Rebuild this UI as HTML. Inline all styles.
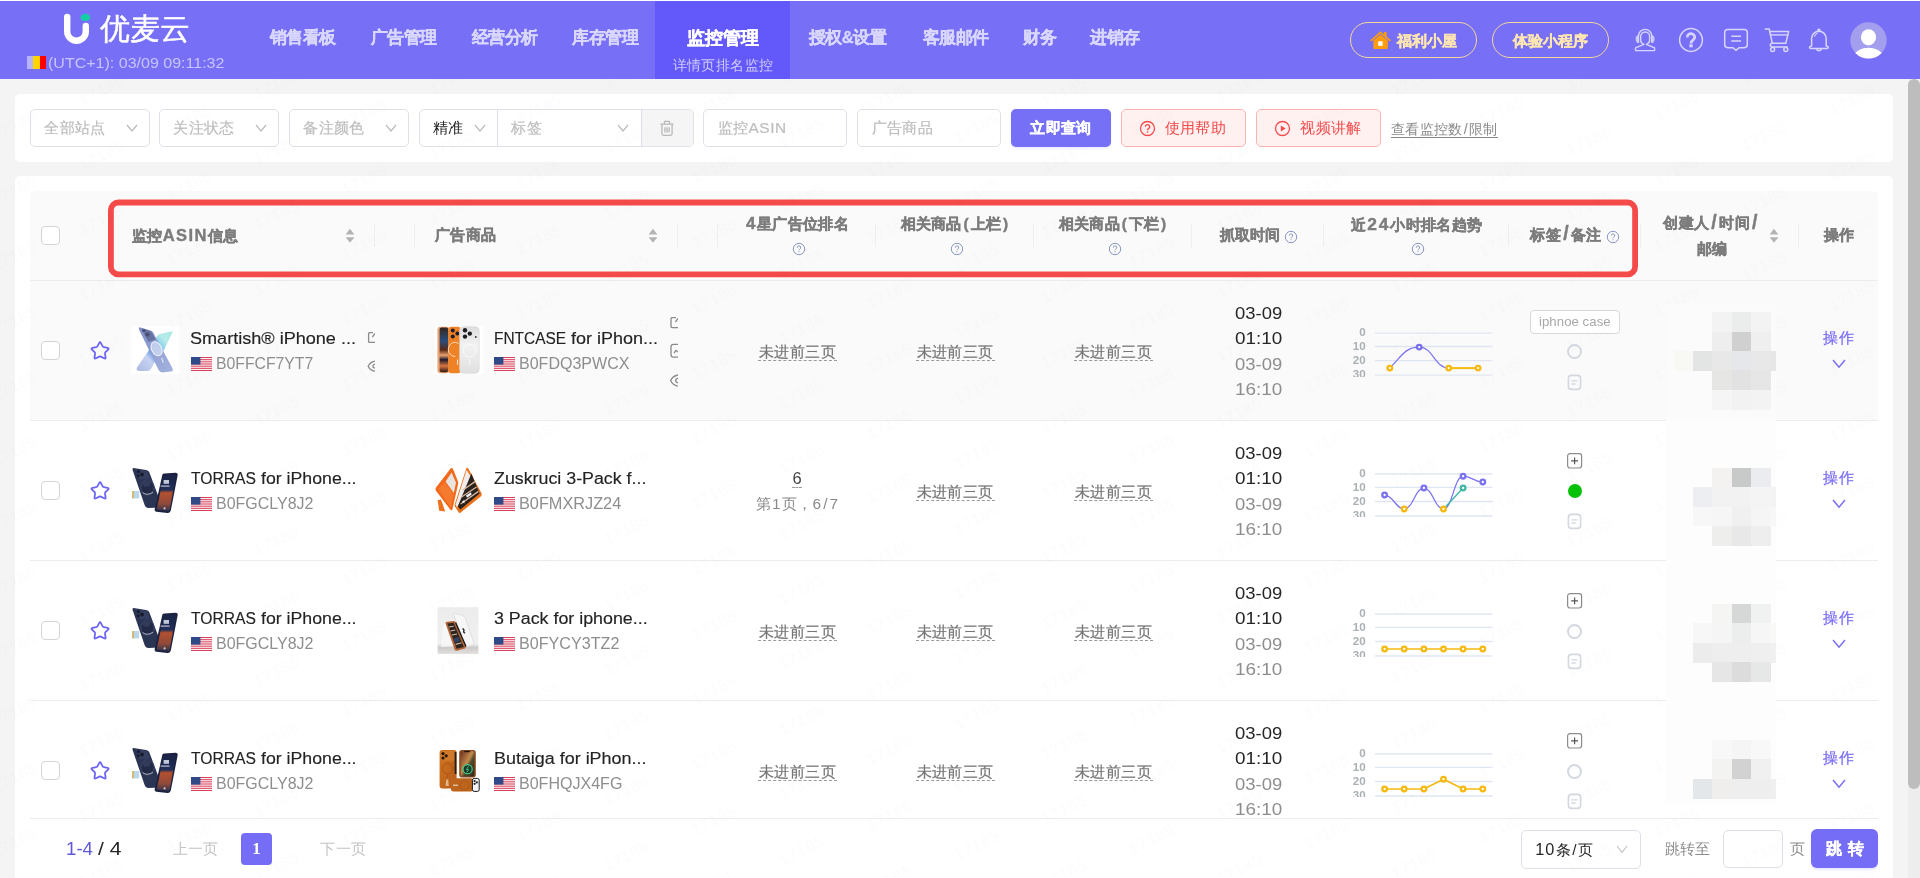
<!DOCTYPE html><html lang="zh"><head><meta charset="utf-8"><title>page</title><style>
*{box-sizing:border-box;margin:0;padding:0}
html,body{width:1920px;height:878px;overflow:hidden;background:#f4f4f4;font-family:"Liberation Sans",sans-serif;}
.a{position:absolute}
.t{position:absolute;white-space:nowrap;line-height:20px;height:20px}
.c{text-align:center}
.hd{left:0;top:1px;width:1920px;height:78px;background:#7770f6}
.nav{color:#d9d7fd;-webkit-text-stroke:0.3px #d9d7fd;font-weight:bold;font-size:16.5px;letter-spacing:-0.5px}
.card{background:#fff;border-radius:5px}
.sel{border:1px solid #e0e0e9;border-radius:5px;background:#fff;height:38px;top:109px}
.ph{color:#bdbdbd;-webkit-text-stroke:0.2px #bdbdbd;font-size:15.4px;letter-spacing:0.4px}
.th{color:#7c7c7c;-webkit-text-stroke:0.4px #7c7c7c;font-weight:bold;font-size:15.4px;letter-spacing:0.3px}
.sep{width:1px;height:24px;top:223px;background:#efefef}
.row{left:30px;width:1848px;height:140px;border-bottom:1px solid #ececec}
.cb{width:18.6px;height:19px;border:1px solid #d4d4d4;border-radius:4px;background:#fff;left:41.2px}
.sl{font-size:19.5px;padding:0 2.2px;line-height:10px;position:relative;top:0.8px}
.ttl{color:#232323;-webkit-text-stroke:0.15px #232323}
.asin{color:#8e8e8e}
.nr{color:#767676;-webkit-text-stroke:0.2px #767676;font-size:15.4px;letter-spacing:0.4px;width:79px;border-bottom:1px dashed #9a9a9a;height:18px;line-height:17px;text-align:center}
.tm{font-size:16.5px;letter-spacing:1px;width:60px;text-align:center}
.op{color:#7b6ef6;-webkit-text-stroke:0.25px #7b6ef6;font-size:15.4px;letter-spacing:0.4px}
</style></head><body><div id="root" style="position:absolute;left:0;top:0;width:1920px;height:878px;will-change:transform"><div class="a" style="left:0;top:0;width:1920px;height:1px;background:#fff"></div><div class="a hd"></div><div class="a" style="left:655px;top:1px;width:135px;height:78px;background:#6359fa"></div><svg class="a" style="left:55px;top:8px" width="40" height="42" viewBox="55 8 40 42"><path d="M67.2 17 V31.5 A9.3 9.3 0 0 0 85.8 31.5 V26" fill="none" stroke="#fff" stroke-width="6.4" stroke-linecap="round"/><ellipse cx="85.4" cy="17.6" rx="4.9" ry="3.5" fill="#13cfa4"/><circle cx="85.6" cy="15.6" r="2.2" fill="#13cfa4"/></svg><div class="t " style="left:99.5px;top:19.00px;color:#fff;-webkit-text-stroke:0.45px #fff;font-size:29.7px;font-weight:500;line-height:40px;height:40px;top:9px">优麦云</div><div class="a" style="left:27px;top:56px;width:6.4px;height:13px;background:#b8b4fb"></div><div class="a" style="left:33.3px;top:56px;width:6.4px;height:13px;background:#ffd400"></div><div class="a" style="left:39.6px;top:56px;width:6.4px;height:13px;background:#ff0000"></div><div class="t " style="left:48.2px;top:52.60px;font-size:14.8px;font-weight:normal;transform:scaleX(1.0822);transform-origin:0 50%;color:#c7c4fb">(UTC+1): 03/09 09:11:32</div><div class="t nav c" style="left:202.5px;top:26.70px;width:200px;">销售看板</div><div class="t nav c" style="left:303.5px;top:26.70px;width:200px;">广告管理</div><div class="t nav c" style="left:404.5px;top:26.70px;width:200px;">经营分析</div><div class="t nav c" style="left:505.0px;top:26.70px;width:200px;">库存管理</div><div class="t nav c" style="left:747.5px;top:26.70px;width:200px;">授权&amp;设置</div><div class="t nav c" style="left:855.5px;top:26.70px;width:200px;">客服邮件</div><div class="t nav c" style="left:939.5px;top:26.70px;width:200px;">财务</div><div class="t nav c" style="left:1015.0px;top:26.70px;width:200px;">进销存</div><div class="t  c" style="left:623.0px;top:28.20px;width:200px;color:#fff;-webkit-text-stroke:0.3px #fff;font-weight:bold;font-size:17.8px">监控管理</div><div class="t  c" style="left:623.0px;top:55.00px;width:200px;color:#cfcbfd;font-size:14.3px;letter-spacing:0.35px">详情页排名监控</div><div class="a" style="left:1350px;top:22px;width:127px;height:36px;border:1px solid #f3d79a;border-radius:18px"></div><div class="a" style="left:1491.5px;top:22px;width:117px;height:36px;border:1px solid #f3d79a;border-radius:18px"></div><svg class="a" style="left:1369px;top:30px" width="24" height="20" viewBox="0 0 24 20"><path d="M1.2 10.2 L11.5 1.2 L15 4.2 V2 H17.6 V6.4 L22 10.2 L20.8 11.4 L11.5 3.6 L2.4 11.4 Z" fill="#ff9c0b"/><path d="M4.4 10.6 L11.5 4.6 L18.8 10.6 V18 Q18.8 19 17.8 19 H5.4 Q4.4 19 4.4 18 Z" fill="#ff9c0b"/><rect x="9.2" y="11.3" width="4.4" height="4.6" fill="#fff"/></svg><div class="t " style="left:1396.8px;top:30.50px;color:#fde6b1;-webkit-text-stroke:0.3px #fde6b1;font-weight:bold;font-size:15.4px">福利小屋</div><div class="t " style="left:1512.8px;top:31.00px;color:#fde6b1;-webkit-text-stroke:0.3px #fde6b1;font-weight:bold;font-size:15.4px">体验小程序</div><svg class="a" style="left:1632px;top:26px" width="26" height="28" viewBox="1632 26 26 28" fill="none" stroke="#d8d5fd" stroke-width="1.4" stroke-linejoin="round"><path d="M1643.9 44.4 C1641.5 43 1640.7 42 1640.7 40.4 V36.4 A4.45 4.45 0 0 1 1649.6 36.4 V40.4 C1649.6 42 1648.8 43 1646.4 44.4 L1654.6 47.9 V50.6 H1635.5 V47.9 Z"/><path d="M1638.5 42.8 V35.9 A6.6 6.6 0 0 1 1651.7 35.9 V42.8"/><path d="M1637.9 35.2 A3 4.2 0 0 0 1637.9 43 Z M1652.3 35.2 A3 4.2 0 0 1 1652.3 43 Z" fill="#d8d5fd" fill-opacity=".75" stroke-width="0.8"/></svg><svg class="a" style="left:1677px;top:26px" width="28" height="28" viewBox="1677 26 28 28" fill="none" stroke="#d8d5fd" stroke-width="1.5"><circle cx="1691" cy="40" r="11.4"/><path d="M1687.3 37.3 A3.7 3.5 0 1 1 1693.2 39.9 Q1691 41.4 1691 43.4" stroke-width="2.7"/><rect x="1689.4" y="44.3" width="3.3" height="3" fill="#d8d5fd" stroke="none"/></svg><svg class="a" style="left:1722px;top:26px" width="28" height="28" viewBox="1722 26 28 28" fill="none" stroke="#d8d5fd" stroke-width="1.5" stroke-linejoin="round"><path d="M1727.8 29.5 H1744.2 Q1747.3 29.5 1747.3 32.6 V44.6 Q1747.3 47.7 1744.2 47.7 H1739 L1736 50.4 L1733 47.7 H1727.8 Q1724.7 47.7 1724.7 44.6 V32.6 Q1724.7 29.5 1727.8 29.5 Z"/><path d="M1731.3 36.3 H1741 M1731.3 41 H1741"/></svg><svg class="a" style="left:1763px;top:26px" width="28" height="28" viewBox="1763 26 28 28" fill="none" stroke="#d8d5fd" stroke-width="1.5" stroke-linejoin="round" stroke-linecap="round"><path d="M1765.3 29 H1769.2 L1772.3 43.2 Q1770 43.6 1770.3 45.3 Q1770.7 47 1772.6 47 H1787.2"/><path d="M1769.8 31.6 H1788.6 L1785.8 43.2 H1772.4"/><path d="M1770.6 34.9 H1787.6" stroke-width="1.7" stroke-opacity=".8"/><circle cx="1772.6" cy="49.4" r="2"/><circle cx="1785.8" cy="49.4" r="2"/></svg><svg class="a" style="left:1806px;top:26px" width="26" height="28" viewBox="1806 26 26 28" fill="none" stroke="#d8d5fd" stroke-width="1.5" stroke-linejoin="round" stroke-linecap="round"><circle cx="1818.9" cy="30.3" r="1.1"/><path d="M1811.6 46 V38.6 A7.3 7.4 0 0 1 1826.2 38.6 V46 Q1828.4 46.4 1828.3 47.4 Q1828.2 48.5 1827 48.5 H1810.8 Q1809.6 48.5 1809.5 47.4 Q1809.4 46.4 1811.6 46 Z"/><path d="M1816.3 48.8 A2.7 2.6 0 0 0 1821.5 48.8"/><path d="M1814.6 36.4 A4.6 4.6 0 0 1 1817.4 33.2" stroke-width="1.1"/></svg><svg class="a" style="left:1850px;top:21.5px" width="37" height="37" viewBox="0 0 37 37"><defs><clipPath id="av"><circle cx="18.5" cy="18.4" r="18.2"/></clipPath></defs><circle cx="18.5" cy="18.4" r="18.2" fill="#a49eee"/><g clip-path="url(#av)" fill="#fff"><ellipse cx="18.5" cy="15.3" rx="7.55" ry="8.1"/><ellipse cx="18.5" cy="36" rx="15" ry="10.3"/></g></svg><div class="a card" style="left:15px;top:94px;width:1878px;height:68px"></div><div class="a sel" style="left:30px;width:120px"></div><div class="t ph" style="left:44.3px;top:118.00px;">全部站点</div><svg class="a" style="left:126px;top:124px" width="12" height="8" viewBox="-1 -1 12 8"><path d="M0 0 L5.0 6 L10 0" fill="none" stroke="#bbb" stroke-width="1.2"/></svg><div class="a sel" style="left:159px;width:120px"></div><div class="t ph" style="left:173.3px;top:118.00px;">关注状态</div><svg class="a" style="left:255px;top:124px" width="12" height="8" viewBox="-1 -1 12 8"><path d="M0 0 L5.0 6 L10 0" fill="none" stroke="#bbb" stroke-width="1.2"/></svg><div class="a sel" style="left:289px;width:120px"></div><div class="t ph" style="left:303.3px;top:118.00px;">备注颜色</div><svg class="a" style="left:385px;top:124px" width="12" height="8" viewBox="-1 -1 12 8"><path d="M0 0 L5.0 6 L10 0" fill="none" stroke="#bbb" stroke-width="1.2"/></svg><div class="a sel" style="left:419px;width:275px"></div><div class="a" style="left:640.5px;top:110px;width:52.5px;height:36px;background:#f5f5f5;border-left:1px solid #dfdfe8;border-radius:0 4px 4px 0"></div><div class="a" style="left:497px;top:110px;width:1px;height:36px;background:#dfdfe8"></div><div class="t " style="left:432.6px;top:118.00px;color:#222;font-size:15.4px;letter-spacing:0.4px">精准</div><svg class="a" style="left:473.5px;top:124px" width="12" height="8" viewBox="-1 -1 12 8"><path d="M0 0 L5.0 6 L10 0" fill="none" stroke="#bbb" stroke-width="1.2"/></svg><div class="t ph" style="left:511.2px;top:118.00px;">标签</div><svg class="a" style="left:616.5px;top:124px" width="12" height="8" viewBox="-1 -1 12 8"><path d="M0 0 L5.0 6 L10 0" fill="none" stroke="#bbb" stroke-width="1.2"/></svg><svg class="a" style="left:659px;top:120px" width="16" height="17" viewBox="0 0 16 17" fill="none" stroke="#b9b9b9" stroke-width="1.3"><path d="M1.4 4.2 H14.6 M5.4 4 V2.2 Q5.4 1.4 6.2 1.4 H9.8 Q10.6 1.4 10.6 2.2 V4 M2.9 4.4 V13.6 Q2.9 15.4 4.7 15.4 H11.3 Q13.1 15.4 13.1 13.6 V4.4 M5.9 7.2 V12.6 M8 7.2 V12.6 M10.1 7.2 V12.6"/></svg><div class="a sel" style="left:703px;width:144px"></div><div class="t ph" style="left:717.6px;top:118.00px;">监控<span style="letter-spacing:0.6px">ASIN</span></div><div class="a sel" style="left:857px;width:144px"></div><div class="t ph" style="left:871.6px;top:118.00px;">广告商品</div><div class="a" style="left:1011px;top:109px;width:100px;height:38px;background:#7670f6;border-radius:5px;box-shadow:0 2px 2px rgba(118,112,246,.12)"></div><div class="t " style="left:1030.3px;top:118.30px;color:#fff;-webkit-text-stroke:0.3px #fff;font-weight:bold;font-size:15.4px;letter-spacing:0.4px">立即查询</div><div class="a" style="left:1121px;top:109px;width:124.5px;height:38px;background:#fff1f0;border:1px solid #f9b5b2;border-radius:5px"></div><div class="a" style="left:1256px;top:109px;width:124.5px;height:38px;background:#fff1f0;border:1px solid #f9b5b2;border-radius:5px"></div><svg class="a" style="left:1139px;top:120px" width="17" height="17" viewBox="0 0 17 17" fill="none" stroke="#f5494b" stroke-width="1.3"><circle cx="8.5" cy="8.5" r="7"/><path d="M6.3 6.8 A2.2 2.1 0 1 1 9.5 8.6 Q8.5 9.2 8.5 10.2" stroke-width="1.4"/><rect x="7.8" y="11.4" width="1.4" height="1.4" fill="#f5494b" stroke="none"/></svg><div class="t " style="left:1164.6px;top:118.00px;color:#f5494b;font-size:15.4px;letter-spacing:0.4px">使用帮助</div><svg class="a" style="left:1274px;top:120px" width="17" height="17" viewBox="0 0 17 17" fill="none" stroke="#f5494b" stroke-width="1.3"><circle cx="8.5" cy="8.5" r="7"/><path d="M6.8 5.4 L11.6 8.5 L6.8 11.6 Z" fill="#f5494b" stroke="none"/></svg><div class="t " style="left:1300.3px;top:118.00px;color:#f5494b;font-size:15.4px;letter-spacing:0.4px">视频讲解</div><div class="t " style="left:1391px;top:119.00px;color:#8a8a8a;font-size:14.3px;letter-spacing:0.3px;border-bottom:1px solid #8a8a8a;height:18px;line-height:19px;top:119.5px">查看监控数<span style="padding:0 1.2px">/</span>限制</div><div class="a card" style="left:15px;top:176px;width:1878px;height:720px"></div><div class="a" style="left:30px;top:191px;width:1848px;height:90px;background:#fafafa;border-bottom:1px solid #ececec;border-radius:5px 5px 0 0"></div><div class="a row" style="top:281px;background:#fafafa"></div><div class="a cb" style="top:341px"></div><svg class="a" style="left:89.4px;top:339.4px" width="22" height="23" viewBox="0 0 22 23"><path d="M10.15 4.03 Q11.05 2.30 11.95 4.03 L13.69 7.38 Q14.05 8.07 14.82 8.20 L18.54 8.82 Q20.47 9.14 19.10 10.53 L16.45 13.22 Q15.90 13.78 16.02 14.55 L16.58 18.28 Q16.87 20.21 15.12 19.34 L11.75 17.65 Q11.05 17.30 10.35 17.65 L6.98 19.34 Q5.23 20.21 5.52 18.28 L6.08 14.55 Q6.20 13.78 5.65 13.22 L3.00 10.53 Q1.63 9.14 3.56 8.82 L7.28 8.20 Q8.05 8.07 8.41 7.38 Z" fill="none" stroke="#6c63f5" stroke-width="1.75" stroke-linejoin="round"/></svg><div class="a" style="left:131px;top:326px;width:48px;height:48px;background:#fff"></div><svg class="a" style="left:131px;top:326px" width="48" height="48" viewBox="0 0 48 48"><defs><filter id="bl" x="-5%" y="-5%" width="110%" height="110%"><feGaussianBlur stdDeviation="0.45"/></filter><linearGradient id="tA1" x1="1" y1="0" x2="0" y2="1"><stop offset="0" stop-color="#a9e8e2"/><stop offset="0.22" stop-color="#b6ebe8"/><stop offset="0.4" stop-color="#7cc4ee"/><stop offset="0.52" stop-color="#4a8fe6"/><stop offset="0.68" stop-color="#c9d3f2"/><stop offset="1" stop-color="#a9b9e2"/></linearGradient><linearGradient id="tA2" x1="0" y1="0" x2="1" y2="1"><stop offset="0" stop-color="#7f8ec6"/><stop offset="0.5" stop-color="#94a3d6"/><stop offset="1" stop-color="#a5b2de"/></linearGradient></defs><g filter="url(#bl)"><rect width="48" height="48" fill="#fff"/><path d="M41 5.2 Q42 5 41.4 6.6 L33 24 L22.6 38 Q20 44.5 16.5 45 L8.5 45 Q4.5 44.6 6 41.5 L17 25.5 L26.5 9.6 Q27.4 8.4 29 8 Z" fill="url(#tA1)"/><path d="M9.4 1.4 L19.6 4.4 Q21.4 5 22.2 6.6 L41.6 42.4 Q42.6 45 40 45.4 L31.6 46.4 Q28.8 46.6 27.6 44 L8 3.4 Q7.4 1 9.4 1.4 Z" fill="url(#tA2)"/><path d="M11 2.6 L19 5 Q20.4 5.6 21 6.8 L24.6 13.6 L17.4 16 L12.4 6.6 Z" fill="#66729f"/><circle cx="12.8" cy="4.6" r="1.7" fill="#475078"/><circle cx="16.4" cy="8.6" r="2.1" fill="#475078"/><ellipse cx="25.6" cy="22.8" rx="5" ry="7.4" transform="rotate(-27 25.6 22.8)" fill="#cfdcf6" fill-opacity=".75" stroke="#f4f7ff" stroke-width="0.9"/><path d="M30.6 32 L32.4 36.6" stroke="#e8ecfa" stroke-width="1.1"/></g></svg><div class="t ttl" style="left:190.3px;top:329.20px;font-size:16px;font-weight:normal;transform:scaleX(1.1295);transform-origin:0 50%;">Smartish® iPhone ...</div><svg class="a" style="left:191px;top:357px" width="21" height="14" viewBox="0 0 21 14"><rect width="21" height="14" fill="#fff"/><rect y="0.00" width="21" height="1.08" fill="#d9405a"/><rect y="2.15" width="21" height="1.08" fill="#d9405a"/><rect y="4.31" width="21" height="1.08" fill="#d9405a"/><rect y="6.46" width="21" height="1.08" fill="#d9405a"/><rect y="8.62" width="21" height="1.08" fill="#d9405a"/><rect y="10.77" width="21" height="1.08" fill="#d9405a"/><rect y="12.92" width="21" height="1.08" fill="#d9405a"/><rect width="9.4" height="7.6" fill="#2f4a86"/></svg><div class="t asin" style="left:216px;top:354.20px;font-size:16px;font-weight:normal;transform:scaleX(0.9849);transform-origin:0 50%;">B0FFCF7YT7</div><svg class="a" style="left:434.5px;top:326px" width="48" height="48" viewBox="0 0 48 48"><defs><filter id="bl" x="-5%" y="-5%" width="110%" height="110%"><feGaussianBlur stdDeviation="0.45"/></filter><linearGradient id="tC1" x1="0" y1="0" x2="0" y2="1"><stop offset="0" stop-color="#dedede"/><stop offset="0.4" stop-color="#f2f2f2"/><stop offset="1" stop-color="#e0e0e0"/></linearGradient><linearGradient id="tC2" x1="0" y1="0" x2="0" y2="1"><stop offset="0" stop-color="#33261f"/><stop offset="0.3" stop-color="#2a4d7a"/><stop offset="0.5" stop-color="#5b2a16"/><stop offset="0.62" stop-color="#e9a070"/><stop offset="0.72" stop-color="#1c1a2a"/><stop offset="0.86" stop-color="#d9763f"/><stop offset="1" stop-color="#2a1a14"/></linearGradient></defs><g filter="url(#bl)"><rect width="48" height="48" fill="#fff"/><rect x="2.4" y="0.8" width="12" height="46.4" rx="3" fill="#e9a57a"/><rect x="4.6" y="1.6" width="8.6" height="44.6" rx="2" fill="url(#tC2)"/><rect x="13.4" y="0.8" width="12.4" height="46.4" rx="3" fill="#f08226"/><circle cx="17.8" cy="4.6" r="2" fill="#1b1e2c"/><circle cx="22.4" cy="7.6" r="2" fill="#1b1e2c"/><circle cx="17.8" cy="10.6" r="2" fill="#1b1e2c"/><path d="M23.6 17.6 A6.6 7 0 1 0 20.4 30.4" stroke="#fbe3cf" stroke-width="0.9" fill="none"/><rect x="22" y="33.6" width="1.1" height="5" fill="#fbe3cf"/><rect x="24.6" y="0.8" width="19.6" height="46.4" rx="4" fill="url(#tC1)" stroke="#d4d6d8" stroke-width="0.6"/><circle cx="30" cy="4.2" r="2.2" fill="#1e1e22"/><circle cx="34.8" cy="7.6" r="2.2" fill="#1e1e22"/><circle cx="30" cy="10.6" r="2.2" fill="#1e1e22"/><circle cx="40.8" cy="11" r="0.9" fill="#333"/><circle cx="34.6" cy="24.6" r="6.4" fill="none" stroke="#fafafa" stroke-width="1"/><rect x="34" y="33" width="1.2" height="5.6" fill="#f8f8f8"/></g></svg><div class="t ttl" style="left:494.4px;top:329.20px;font-size:16px;font-weight:normal;transform:scaleX(0.9642);transform-origin:0 50%;">FNTCASE</div><div class="t ttl" style="left:571.3px;top:329.20px;font-size:16px;font-weight:normal;transform:scaleX(1.1231);transform-origin:0 50%;">for iPhon...</div><svg class="a" style="left:494.3px;top:357px" width="21" height="14" viewBox="0 0 21 14"><rect width="21" height="14" fill="#fff"/><rect y="0.00" width="21" height="1.08" fill="#d9405a"/><rect y="2.15" width="21" height="1.08" fill="#d9405a"/><rect y="4.31" width="21" height="1.08" fill="#d9405a"/><rect y="6.46" width="21" height="1.08" fill="#d9405a"/><rect y="8.62" width="21" height="1.08" fill="#d9405a"/><rect y="10.77" width="21" height="1.08" fill="#d9405a"/><rect y="12.92" width="21" height="1.08" fill="#d9405a"/><rect width="9.4" height="7.6" fill="#2f4a86"/></svg><div class="t asin" style="left:519.2px;top:354.20px;font-size:16px;font-weight:normal;transform:scaleX(1.0014);transform-origin:0 50%;">B0FDQ3PWCX</div><svg class="a" style="left:367px;top:330px" width="8" height="46" viewBox="0 0 8 46" fill="none" stroke="#8a8a8a" stroke-width="1.3"><path d="M6 2.6 H2.6 Q1.6 2.6 1.6 3.6 V11.4 Q1.6 12.4 2.6 12.4 H8"/><path d="M5.4 7 L8 3.4" /><path d="M8 31.2 Q3 32.2 1.2 36.2 Q3 40.2 8 41.2"/><path d="M8 34.2 Q5.8 34.6 5.8 36.2 Q5.8 37.8 8 38.2"/></svg><svg class="a" style="left:669px;top:315px" width="9" height="74" viewBox="0 0 9 74" fill="none" stroke="#8a8a8a" stroke-width="1.3"><path d="M7 2.6 H3 Q2 2.6 2 3.6 V11.6 Q2 12.6 3 12.6 H9"/><path d="M6.4 7 L9 3.4"/><path d="M9 29.4 H4.4 Q2 29.4 2 31.8 V39.8 Q2 42.2 4.4 42.2 H9"/><path d="M5 38 L7 35.4 L9 37"/><path d="M9 60 Q3.6 61 1.7 65.6 Q3.6 70.2 9 71.2"/><path d="M9 63.4 Q6.6 63.8 6.6 65.6 Q6.6 67.4 9 67.8"/></svg><div class="t nr" style="left:758px;top:343.4px">未进前三页</div><div class="t nr" style="left:915.6px;top:343.4px">未进前三页</div><div class="t nr" style="left:1074px;top:343.4px">未进前三页</div><div class="t " style="left:1235.2px;top:303.00px;font-size:16.3px;font-weight:normal;transform:scaleX(1.1331);transform-origin:0 50%;color:#262626">03-09</div><div class="t " style="left:1235.2px;top:328.40px;font-size:16.3px;font-weight:normal;transform:scaleX(1.1583);transform-origin:0 50%;color:#262626">01:10</div><div class="t " style="left:1235.2px;top:353.80px;font-size:16.3px;font-weight:normal;transform:scaleX(1.1331);transform-origin:0 50%;color:#8e8e8e">03-09</div><div class="t " style="left:1235.2px;top:379.20px;font-size:16.3px;font-weight:normal;transform:scaleX(1.1583);transform-origin:0 50%;color:#8e8e8e">16:10</div><svg class="a" style="left:1340px;top:321px" width="165" height="56" viewBox="1340 321 165 56"><path d="M1375 333.1 H1492.5" stroke="#e0e6f1" stroke-width="1.3"/><path d="M1375 346.5 H1492.5" stroke="#e0e6f1" stroke-width="1.3"/><path d="M1375 360.6 H1492.5" stroke="#e0e6f1" stroke-width="1.3"/><path d="M1375 375.1 H1492.5" stroke="#e0e6f1" stroke-width="1.3"/><text x="1365.6" y="336.4" text-anchor="end" font-size="11.6" font-weight="bold" fill="#aab0b3" font-family="Liberation Sans, sans-serif">0</text><text x="1365.6" y="349.8" text-anchor="end" font-size="11.6" font-weight="bold" fill="#aab0b3" font-family="Liberation Sans, sans-serif">10</text><text x="1365.6" y="363.9" text-anchor="end" font-size="11.6" font-weight="bold" fill="#aab0b3" font-family="Liberation Sans, sans-serif">20</text><text x="1365.6" y="378.4" text-anchor="end" font-size="11.6" font-weight="bold" fill="#aab0b3" font-family="Liberation Sans, sans-serif">30</text><path d="M1389.8 368.1 C1401.8 356.1 1405.2 347.1 1419.2 347.1 C1433.2 347.1 1434.7 368.1 1448.7 368.1" fill="none" stroke="#7b72f0" stroke-width="1.25"/><path d="M1448.7 368.1 H1478.1" stroke="#f5b90f" stroke-width="2"/><circle cx="1389.8" cy="368.1" r="2.3" fill="#fff" stroke="#f5b90f" stroke-width="2.3"/><circle cx="1419.2" cy="347.1" r="2.3" fill="#fff" stroke="#7b72f0" stroke-width="2.3"/><circle cx="1448.7" cy="368.1" r="2.3" fill="#fff" stroke="#f5b90f" stroke-width="2.3"/><circle cx="1478.1" cy="368.1" r="2.3" fill="#fff" stroke="#f5b90f" stroke-width="2.3"/></svg><div class="a" style="left:1530px;top:310.3px;width:90px;height:23.5px;border:1px solid #d9d9d9;border-radius:4px;background:#fff"></div><div class="t " style="left:1539px;top:312.00px;color:#a8a8a8;font-size:13.2px;letter-spacing:0.05px">iphnoe case</div><div class="a" style="left:1567.3px;top:344.2px;width:15px;height:15px;border-radius:50%;border:2px solid #d3d7e0"></div><svg class="a" style="left:1566px;top:374px" width="17" height="17" viewBox="0 0 17 17" fill="none" stroke="#d3d7e0" stroke-width="1.6"><rect x="2.4" y="1.4" width="12.2" height="14" rx="3.2"/><path d="M5.4 6.8 H11.6 M5.4 10 H9.6" stroke-width="1.3"/></svg><div class="t op" style="left:1823.3px;top:328.30px;">操作</div><svg class="a" style="left:1832.2px;top:359.2px" width="14" height="9.2" viewBox="-1 -1 14 9.2"><path d="M0 0 L6.0 7.2 L12 0" fill="none" stroke="#7b6ef6" stroke-width="1.5"/></svg><div class="a row" style="top:421px;background:#fff"></div><div class="a cb" style="top:481px"></div><svg class="a" style="left:89.4px;top:479.4px" width="22" height="23" viewBox="0 0 22 23"><path d="M10.15 4.03 Q11.05 2.30 11.95 4.03 L13.69 7.38 Q14.05 8.07 14.82 8.20 L18.54 8.82 Q20.47 9.14 19.10 10.53 L16.45 13.22 Q15.90 13.78 16.02 14.55 L16.58 18.28 Q16.87 20.21 15.12 19.34 L11.75 17.65 Q11.05 17.30 10.35 17.65 L6.98 19.34 Q5.23 20.21 5.52 18.28 L6.08 14.55 Q6.20 13.78 5.65 13.22 L3.00 10.53 Q1.63 9.14 3.56 8.82 L7.28 8.20 Q8.05 8.07 8.41 7.38 Z" fill="none" stroke="#6c63f5" stroke-width="1.75" stroke-linejoin="round"/></svg><svg class="a" style="left:131px;top:466px" width="48" height="48" viewBox="0 0 48 48"><defs><filter id="bl" x="-5%" y="-5%" width="110%" height="110%"><feGaussianBlur stdDeviation="0.45"/></filter><linearGradient id="tB1" x1="0" y1="0" x2="0" y2="1"><stop offset="0" stop-color="#1a2446"/><stop offset="0.42" stop-color="#22305a"/><stop offset="0.5" stop-color="#b5502f"/><stop offset="0.8" stop-color="#8f4a3a"/><stop offset="1" stop-color="#30334a"/></linearGradient></defs><g filter="url(#bl)"><rect x="1.2" y="25" width="7" height="7.4" fill="#b9d6ea"/><rect x="1.2" y="25" width="1.6" height="7.4" fill="#d9b25a"/><path d="M2.6 2 Q1 2 1.6 4 L13.6 39 Q14.6 42 17.6 42 L28 41.6 Q31.4 41.2 30.4 38.4 L18.4 6.6 Q17.6 4.4 15 4 Z" fill="#2c3552"/><path d="M4.6 3.2 L14.6 4.8 Q16 5.2 16.6 6.6 L18.8 12.4 L9 13 L5.4 6 Z" fill="#353f61"/><circle cx="7.4" cy="5.6" r="1.7" fill="#161b2e"/><circle cx="11" cy="8.6" r="2" fill="#161b2e"/><circle cx="7.2" cy="9.8" r="1.5" fill="#161b2e"/><ellipse cx="16.4" cy="21.4" rx="6.6" ry="7.6" fill="#242c47" stroke="#3e4868" stroke-width="1"/><ellipse cx="15.4" cy="17.6" rx="4" ry="3.2" fill="#303a5a"/><path d="M11.6 26.6 Q16 30 22 26.4" stroke="#c7cbd8" stroke-width="0.8" fill="none"/><path d="M31.4 8.6 Q31.8 7.4 33.4 7.4 L44.6 6.8 Q47.2 6.8 46.6 9.4 L39.8 44.6 Q39.2 47.4 36.4 47 L25.6 45.8 Q23 45.4 23.8 42.8 Z" fill="#1b2340"/><path d="M32.8 9.4 L45 8.6 L38.4 45 L25.6 43.8 Z" fill="url(#tB1)"/><rect x="32.6" y="14" width="5.4" height="3.8" fill="#dfe4f0" opacity=".85"/><rect x="29.6" y="19.4" width="9" height="1.4" fill="#dfe4f0" opacity=".7"/><circle cx="33.6" cy="42.4" r="1.1" fill="#e8e8ee" opacity=".8"/></g></svg><div class="t ttl" style="left:190.5px;top:469.20px;font-size:16px;font-weight:normal;transform:scaleX(0.9775);transform-origin:0 50%;">TORRAS</div><div class="t ttl" style="left:260.79999999999995px;top:469.20px;font-size:16px;font-weight:normal;transform:scaleX(1.1068);transform-origin:0 50%;">for iPhone...</div><svg class="a" style="left:191px;top:497px" width="21" height="14" viewBox="0 0 21 14"><rect width="21" height="14" fill="#fff"/><rect y="0.00" width="21" height="1.08" fill="#d9405a"/><rect y="2.15" width="21" height="1.08" fill="#d9405a"/><rect y="4.31" width="21" height="1.08" fill="#d9405a"/><rect y="6.46" width="21" height="1.08" fill="#d9405a"/><rect y="8.62" width="21" height="1.08" fill="#d9405a"/><rect y="10.77" width="21" height="1.08" fill="#d9405a"/><rect y="12.92" width="21" height="1.08" fill="#d9405a"/><rect width="9.4" height="7.6" fill="#2f4a86"/></svg><div class="t asin" style="left:216px;top:494.20px;font-size:16px;font-weight:normal;transform:scaleX(0.9987);transform-origin:0 50%;">B0FGCLY8J2</div><svg class="a" style="left:434.5px;top:466px" width="48" height="48" viewBox="0 0 48 48"><defs><filter id="bl" x="-5%" y="-5%" width="110%" height="110%"><feGaussianBlur stdDeviation="0.45"/></filter></defs><g filter="url(#bl)"><path d="M16 2 Q17.4 1.6 18.2 3.4 L23 15.4 Q23.4 16.8 23 18.4 L17.4 43.4 Q16.6 45 15.2 43.6 L0.8 24.4 Q0 23 1 21.6 Z" fill="#f2691c"/><path d="M16.6 6.6 L21 16.8 L18.8 27 L10.6 15.4 Z" fill="#e9e4e0"/><path d="M3.2 22.8 L10 16.4 L18.4 28.4 L16 42 Z" fill="#f47a2e"/><path d="M2.6 34.2 L6 33.6 L10.2 45.4 L4.2 44.8 Z" fill="#f0701e"/><path d="M31.4 2 Q32.8 1.4 33.6 3 L46.6 27.6 Q47.2 29.2 45.8 30.4 L25.4 46.8 Q24 47.6 23.4 46 L19.6 40 Q19.4 38.8 20 37.4 Z" fill="#e8731f"/><path d="M31.6 4 L38 14 L22 41.4 L20.6 38.6 Z" fill="#efeceb"/><path d="M36.4 7.4 L44.6 27.6 L25.4 43.6 L22.8 40.6 Z" fill="#2a211d"/><path d="M28 24 L40 15.6 M26.6 31 L41.6 21 M25.6 38 L43.4 25.4" stroke="#d8b8a4" stroke-width="1.3"/><path d="M31 29.6 L36 26.2 L36.6 28.6 L32 31.8 Z" fill="#f4f4f4"/><path d="M27 35.6 L29.4 34 L29.4 37.6 Z" fill="#fff"/></g></svg><div class="t ttl" style="left:493.8px;top:469.20px;font-size:16px;font-weight:normal;transform:scaleX(1.1130);transform-origin:0 50%;">Zuskruci 3-Pack f...</div><svg class="a" style="left:494.3px;top:497px" width="21" height="14" viewBox="0 0 21 14"><rect width="21" height="14" fill="#fff"/><rect y="0.00" width="21" height="1.08" fill="#d9405a"/><rect y="2.15" width="21" height="1.08" fill="#d9405a"/><rect y="4.31" width="21" height="1.08" fill="#d9405a"/><rect y="6.46" width="21" height="1.08" fill="#d9405a"/><rect y="8.62" width="21" height="1.08" fill="#d9405a"/><rect y="10.77" width="21" height="1.08" fill="#d9405a"/><rect y="12.92" width="21" height="1.08" fill="#d9405a"/><rect width="9.4" height="7.6" fill="#2f4a86"/></svg><div class="t asin" style="left:519.2px;top:494.20px;font-size:16px;font-weight:normal;transform:scaleX(1.0172);transform-origin:0 50%;">B0FMXRJZ24</div><div class="t  c" style="left:777.0px;top:468.30px;width:40px;color:#444;font-size:16.5px">6</div><div class="a" style="left:792px;top:486.6px;width:10px;height:0;border-bottom:1px dashed #9a9a9a"></div><div class="t  c" style="left:697.5px;top:494.00px;width:200px;color:#8a8a8a;font-size:15.4px;letter-spacing:0.4px">第<span style="letter-spacing:1px;padding-left:0.6px">1</span>页，<span style="letter-spacing:0.9px">6</span><span style="padding:0 1.4px">/</span><span style="letter-spacing:0.9px">7</span></div><div class="t nr" style="left:915.6px;top:483.4px">未进前三页</div><div class="t nr" style="left:1074px;top:483.4px">未进前三页</div><div class="t " style="left:1235.2px;top:443.00px;font-size:16.3px;font-weight:normal;transform:scaleX(1.1331);transform-origin:0 50%;color:#262626">03-09</div><div class="t " style="left:1235.2px;top:468.40px;font-size:16.3px;font-weight:normal;transform:scaleX(1.1583);transform-origin:0 50%;color:#262626">01:10</div><div class="t " style="left:1235.2px;top:493.80px;font-size:16.3px;font-weight:normal;transform:scaleX(1.1331);transform-origin:0 50%;color:#8e8e8e">03-09</div><div class="t " style="left:1235.2px;top:519.20px;font-size:16.3px;font-weight:normal;transform:scaleX(1.1583);transform-origin:0 50%;color:#8e8e8e">16:10</div><svg class="a" style="left:1340px;top:461px" width="165" height="56" viewBox="1340 461 165 56"><path d="M1375 474.0 H1492.5" stroke="#e0e6f1" stroke-width="1.3"/><path d="M1375 487.4 H1492.5" stroke="#e0e6f1" stroke-width="1.3"/><path d="M1375 501.5 H1492.5" stroke="#e0e6f1" stroke-width="1.3"/><path d="M1375 516.0 H1492.5" stroke="#e0e6f1" stroke-width="1.3"/><text x="1365.6" y="477.3" text-anchor="end" font-size="11.6" font-weight="bold" fill="#aab0b3" font-family="Liberation Sans, sans-serif">0</text><text x="1365.6" y="490.7" text-anchor="end" font-size="11.6" font-weight="bold" fill="#aab0b3" font-family="Liberation Sans, sans-serif">10</text><text x="1365.6" y="504.8" text-anchor="end" font-size="11.6" font-weight="bold" fill="#aab0b3" font-family="Liberation Sans, sans-serif">20</text><text x="1365.6" y="519.3" text-anchor="end" font-size="11.6" font-weight="bold" fill="#aab0b3" font-family="Liberation Sans, sans-serif">30</text><path d="M1384.6 495.0 C1393.4 495.0 1395.4 509.0 1404.2 509.0 C1413.1 509.0 1415.0 488.0 1423.9 488.0 C1432.7 488.0 1434.7 509.0 1443.5 509.0 C1452.3 509.0 1454.3 476.2 1463.1 476.2 C1472.0 476.2 1473.9 482.0 1482.8 482.0" fill="none" stroke="#7b72f0" stroke-width="1.25"/><path d="M1443.5 509.0 L1463.1 488.0" stroke="#3fb9a5" stroke-width="1.4"/><circle cx="1463.1" cy="488.0" r="2.3" fill="#fff" stroke="#3fb9a5" stroke-width="2.3"/><circle cx="1384.6" cy="495.0" r="2.3" fill="#fff" stroke="#7b72f0" stroke-width="2.3"/><circle cx="1404.2" cy="509.0" r="2.3" fill="#fff" stroke="#f5b90f" stroke-width="2.3"/><circle cx="1423.9" cy="488.0" r="2.3" fill="#fff" stroke="#7b72f0" stroke-width="2.3"/><circle cx="1443.5" cy="509.0" r="2.3" fill="#fff" stroke="#f5b90f" stroke-width="2.3"/><circle cx="1463.1" cy="476.2" r="2.3" fill="#fff" stroke="#7b72f0" stroke-width="2.3"/><circle cx="1482.8" cy="482.0" r="2.3" fill="#fff" stroke="#7b72f0" stroke-width="2.3"/></svg><svg class="a" style="left:1566px;top:452px" width="18" height="18" viewBox="0 0 18 18" fill="none" stroke="#8c8c8c" stroke-width="1.2"><rect x="1.6" y="1.6" width="14" height="14.4" rx="2.4"/><path d="M5.2 8.8 H12 M8.6 5.4 V12.2" stroke="#555"/></svg><div class="a" style="left:1567.7px;top:484px;width:14.2px;height:14.2px;border-radius:50%;background:#06c206"></div><svg class="a" style="left:1566px;top:513px" width="17" height="17" viewBox="0 0 17 17" fill="none" stroke="#d3d7e0" stroke-width="1.6"><rect x="2.4" y="1.4" width="12.2" height="14" rx="3.2"/><path d="M5.4 6.8 H11.6 M5.4 10 H9.6" stroke-width="1.3"/></svg><div class="t op" style="left:1823.3px;top:468.30px;">操作</div><svg class="a" style="left:1832.2px;top:499.2px" width="14" height="9.2" viewBox="-1 -1 14 9.2"><path d="M0 0 L6.0 7.2 L12 0" fill="none" stroke="#7b6ef6" stroke-width="1.5"/></svg><div class="a row" style="top:561px;background:#fff"></div><div class="a cb" style="top:621px"></div><svg class="a" style="left:89.4px;top:619.4px" width="22" height="23" viewBox="0 0 22 23"><path d="M10.15 4.03 Q11.05 2.30 11.95 4.03 L13.69 7.38 Q14.05 8.07 14.82 8.20 L18.54 8.82 Q20.47 9.14 19.10 10.53 L16.45 13.22 Q15.90 13.78 16.02 14.55 L16.58 18.28 Q16.87 20.21 15.12 19.34 L11.75 17.65 Q11.05 17.30 10.35 17.65 L6.98 19.34 Q5.23 20.21 5.52 18.28 L6.08 14.55 Q6.20 13.78 5.65 13.22 L3.00 10.53 Q1.63 9.14 3.56 8.82 L7.28 8.20 Q8.05 8.07 8.41 7.38 Z" fill="none" stroke="#6c63f5" stroke-width="1.75" stroke-linejoin="round"/></svg><svg class="a" style="left:131px;top:606px" width="48" height="48" viewBox="0 0 48 48"><defs><filter id="bl" x="-5%" y="-5%" width="110%" height="110%"><feGaussianBlur stdDeviation="0.45"/></filter><linearGradient id="tB1" x1="0" y1="0" x2="0" y2="1"><stop offset="0" stop-color="#1a2446"/><stop offset="0.42" stop-color="#22305a"/><stop offset="0.5" stop-color="#b5502f"/><stop offset="0.8" stop-color="#8f4a3a"/><stop offset="1" stop-color="#30334a"/></linearGradient></defs><g filter="url(#bl)"><rect x="1.2" y="25" width="7" height="7.4" fill="#b9d6ea"/><rect x="1.2" y="25" width="1.6" height="7.4" fill="#d9b25a"/><path d="M2.6 2 Q1 2 1.6 4 L13.6 39 Q14.6 42 17.6 42 L28 41.6 Q31.4 41.2 30.4 38.4 L18.4 6.6 Q17.6 4.4 15 4 Z" fill="#2c3552"/><path d="M4.6 3.2 L14.6 4.8 Q16 5.2 16.6 6.6 L18.8 12.4 L9 13 L5.4 6 Z" fill="#353f61"/><circle cx="7.4" cy="5.6" r="1.7" fill="#161b2e"/><circle cx="11" cy="8.6" r="2" fill="#161b2e"/><circle cx="7.2" cy="9.8" r="1.5" fill="#161b2e"/><ellipse cx="16.4" cy="21.4" rx="6.6" ry="7.6" fill="#242c47" stroke="#3e4868" stroke-width="1"/><ellipse cx="15.4" cy="17.6" rx="4" ry="3.2" fill="#303a5a"/><path d="M11.6 26.6 Q16 30 22 26.4" stroke="#c7cbd8" stroke-width="0.8" fill="none"/><path d="M31.4 8.6 Q31.8 7.4 33.4 7.4 L44.6 6.8 Q47.2 6.8 46.6 9.4 L39.8 44.6 Q39.2 47.4 36.4 47 L25.6 45.8 Q23 45.4 23.8 42.8 Z" fill="#1b2340"/><path d="M32.8 9.4 L45 8.6 L38.4 45 L25.6 43.8 Z" fill="url(#tB1)"/><rect x="32.6" y="14" width="5.4" height="3.8" fill="#dfe4f0" opacity=".85"/><rect x="29.6" y="19.4" width="9" height="1.4" fill="#dfe4f0" opacity=".7"/><circle cx="33.6" cy="42.4" r="1.1" fill="#e8e8ee" opacity=".8"/></g></svg><div class="t ttl" style="left:190.5px;top:609.20px;font-size:16px;font-weight:normal;transform:scaleX(0.9775);transform-origin:0 50%;">TORRAS</div><div class="t ttl" style="left:260.79999999999995px;top:609.20px;font-size:16px;font-weight:normal;transform:scaleX(1.1068);transform-origin:0 50%;">for iPhone...</div><svg class="a" style="left:191px;top:637px" width="21" height="14" viewBox="0 0 21 14"><rect width="21" height="14" fill="#fff"/><rect y="0.00" width="21" height="1.08" fill="#d9405a"/><rect y="2.15" width="21" height="1.08" fill="#d9405a"/><rect y="4.31" width="21" height="1.08" fill="#d9405a"/><rect y="6.46" width="21" height="1.08" fill="#d9405a"/><rect y="8.62" width="21" height="1.08" fill="#d9405a"/><rect y="10.77" width="21" height="1.08" fill="#d9405a"/><rect y="12.92" width="21" height="1.08" fill="#d9405a"/><rect width="9.4" height="7.6" fill="#2f4a86"/></svg><div class="t asin" style="left:216px;top:634.20px;font-size:16px;font-weight:normal;transform:scaleX(0.9987);transform-origin:0 50%;">B0FGCLY8J2</div><svg class="a" style="left:434.5px;top:606px" width="48" height="48" viewBox="0 0 48 48"><defs><filter id="bl" x="-5%" y="-5%" width="110%" height="110%"><feGaussianBlur stdDeviation="0.45"/></filter><linearGradient id="tE1" x1="0" y1="0" x2="0" y2="1"><stop offset="0" stop-color="#ececec"/><stop offset="0.78" stop-color="#f0f0f0"/><stop offset="0.86" stop-color="#cfcaca"/><stop offset="1" stop-color="#e4e2e2"/></linearGradient></defs><g filter="url(#bl)"><rect x="2.6" y="1.2" width="40.8" height="47" fill="url(#tE1)"/><path d="M8 20 Q12 13 20 14.6 L20 40 L6 41 Z" fill="#f7f7f7" opacity=".8"/><path d="M18.6 8.4 Q19 7.4 20.6 7.6 L27.6 9.6 Q29.4 10.2 30.2 12 L38.8 36.4 Q39.2 38.2 37.6 38.8 L30.6 41.2 Z" fill="#f6f6f7" stroke="#d9d9dc" stroke-width="0.7"/><path d="M10.6 17.4 Q10.2 16 11.8 15.8 L18.6 15 Q20 15 20.6 16.4 L30.8 40.6 Q31.2 42.2 29.8 42.6 L21.8 44.8 Q20.2 45 19.6 43.6 Z" fill="#b4653a"/><path d="M12.4 17.6 L18.6 16.8 L28.8 41 L21.6 42.8 Z" fill="#2c2522"/><path d="M14 21 L18.6 20.2 M15.4 25 L20.2 24 M17 29 L22 28 M20.6 38.4 L26.6 36.8" stroke="#d9b7a0" stroke-width="1.1"/><path d="M18.4 32.4 L23.6 31 L25 35 L19.8 36.4 Z" fill="#324063"/><path d="M20.6 16.4 L31 40.6" stroke="#161412" stroke-width="1.3"/><path d="M27.6 22.4 L29 24 L28.6 26 L30 27.2" stroke="#222" stroke-width="1.3" fill="none"/></g></svg><div class="t ttl" style="left:493.8px;top:609.20px;font-size:16px;font-weight:normal;transform:scaleX(1.1142);transform-origin:0 50%;">3 Pack for iphone...</div><svg class="a" style="left:494.3px;top:637px" width="21" height="14" viewBox="0 0 21 14"><rect width="21" height="14" fill="#fff"/><rect y="0.00" width="21" height="1.08" fill="#d9405a"/><rect y="2.15" width="21" height="1.08" fill="#d9405a"/><rect y="4.31" width="21" height="1.08" fill="#d9405a"/><rect y="6.46" width="21" height="1.08" fill="#d9405a"/><rect y="8.62" width="21" height="1.08" fill="#d9405a"/><rect y="10.77" width="21" height="1.08" fill="#d9405a"/><rect y="12.92" width="21" height="1.08" fill="#d9405a"/><rect width="9.4" height="7.6" fill="#2f4a86"/></svg><div class="t asin" style="left:519.2px;top:634.20px;font-size:16px;font-weight:normal;transform:scaleX(1.0081);transform-origin:0 50%;">B0FYCY3TZ2</div><div class="t nr" style="left:758px;top:623.4px">未进前三页</div><div class="t nr" style="left:915.6px;top:623.4px">未进前三页</div><div class="t nr" style="left:1074px;top:623.4px">未进前三页</div><div class="t " style="left:1235.2px;top:583.00px;font-size:16.3px;font-weight:normal;transform:scaleX(1.1331);transform-origin:0 50%;color:#262626">03-09</div><div class="t " style="left:1235.2px;top:608.40px;font-size:16.3px;font-weight:normal;transform:scaleX(1.1583);transform-origin:0 50%;color:#262626">01:10</div><div class="t " style="left:1235.2px;top:633.80px;font-size:16.3px;font-weight:normal;transform:scaleX(1.1331);transform-origin:0 50%;color:#8e8e8e">03-09</div><div class="t " style="left:1235.2px;top:659.20px;font-size:16.3px;font-weight:normal;transform:scaleX(1.1583);transform-origin:0 50%;color:#8e8e8e">16:10</div><svg class="a" style="left:1340px;top:601px" width="165" height="56" viewBox="1340 601 165 56"><path d="M1375 614.0 H1492.5" stroke="#e0e6f1" stroke-width="1.3"/><path d="M1375 627.4 H1492.5" stroke="#e0e6f1" stroke-width="1.3"/><path d="M1375 641.5 H1492.5" stroke="#e0e6f1" stroke-width="1.3"/><path d="M1375 656.0 H1492.5" stroke="#e0e6f1" stroke-width="1.3"/><text x="1365.6" y="617.3" text-anchor="end" font-size="11.6" font-weight="bold" fill="#aab0b3" font-family="Liberation Sans, sans-serif">0</text><text x="1365.6" y="630.7" text-anchor="end" font-size="11.6" font-weight="bold" fill="#aab0b3" font-family="Liberation Sans, sans-serif">10</text><text x="1365.6" y="644.8" text-anchor="end" font-size="11.6" font-weight="bold" fill="#aab0b3" font-family="Liberation Sans, sans-serif">20</text><text x="1365.6" y="659.3" text-anchor="end" font-size="11.6" font-weight="bold" fill="#aab0b3" font-family="Liberation Sans, sans-serif">30</text><path d="M1384.6 649.0 L1404.2 649.0 L1423.9 649.0 L1443.5 649.0 L1463.1 649.0 L1482.8 649.0" fill="none" stroke="#f5b90f" stroke-width="1.6"/><circle cx="1384.6" cy="649.0" r="2.3" fill="#fff" stroke="#f5b90f" stroke-width="2.3"/><circle cx="1404.2" cy="649.0" r="2.3" fill="#fff" stroke="#f5b90f" stroke-width="2.3"/><circle cx="1423.9" cy="649.0" r="2.3" fill="#fff" stroke="#f5b90f" stroke-width="2.3"/><circle cx="1443.5" cy="649.0" r="2.3" fill="#fff" stroke="#f5b90f" stroke-width="2.3"/><circle cx="1463.1" cy="649.0" r="2.3" fill="#fff" stroke="#f5b90f" stroke-width="2.3"/><circle cx="1482.8" cy="649.0" r="2.3" fill="#fff" stroke="#f5b90f" stroke-width="2.3"/></svg><svg class="a" style="left:1566px;top:592px" width="18" height="18" viewBox="0 0 18 18" fill="none" stroke="#8c8c8c" stroke-width="1.2"><rect x="1.6" y="1.6" width="14" height="14.4" rx="2.4"/><path d="M5.2 8.8 H12 M8.6 5.4 V12.2" stroke="#555"/></svg><div class="a" style="left:1567.3px;top:623.5px;width:15px;height:15px;border-radius:50%;border:2px solid #d3d7e0"></div><svg class="a" style="left:1566px;top:653px" width="17" height="17" viewBox="0 0 17 17" fill="none" stroke="#d3d7e0" stroke-width="1.6"><rect x="2.4" y="1.4" width="12.2" height="14" rx="3.2"/><path d="M5.4 6.8 H11.6 M5.4 10 H9.6" stroke-width="1.3"/></svg><div class="t op" style="left:1823.3px;top:608.30px;">操作</div><svg class="a" style="left:1832.2px;top:639.2px" width="14" height="9.2" viewBox="-1 -1 14 9.2"><path d="M0 0 L6.0 7.2 L12 0" fill="none" stroke="#7b6ef6" stroke-width="1.5"/></svg><div class="a row" style="top:701px;background:#fff"></div><div class="a cb" style="top:761px"></div><svg class="a" style="left:89.4px;top:759.4px" width="22" height="23" viewBox="0 0 22 23"><path d="M10.15 4.03 Q11.05 2.30 11.95 4.03 L13.69 7.38 Q14.05 8.07 14.82 8.20 L18.54 8.82 Q20.47 9.14 19.10 10.53 L16.45 13.22 Q15.90 13.78 16.02 14.55 L16.58 18.28 Q16.87 20.21 15.12 19.34 L11.75 17.65 Q11.05 17.30 10.35 17.65 L6.98 19.34 Q5.23 20.21 5.52 18.28 L6.08 14.55 Q6.20 13.78 5.65 13.22 L3.00 10.53 Q1.63 9.14 3.56 8.82 L7.28 8.20 Q8.05 8.07 8.41 7.38 Z" fill="none" stroke="#6c63f5" stroke-width="1.75" stroke-linejoin="round"/></svg><svg class="a" style="left:131px;top:746px" width="48" height="48" viewBox="0 0 48 48"><defs><filter id="bl" x="-5%" y="-5%" width="110%" height="110%"><feGaussianBlur stdDeviation="0.45"/></filter><linearGradient id="tB1" x1="0" y1="0" x2="0" y2="1"><stop offset="0" stop-color="#1a2446"/><stop offset="0.42" stop-color="#22305a"/><stop offset="0.5" stop-color="#b5502f"/><stop offset="0.8" stop-color="#8f4a3a"/><stop offset="1" stop-color="#30334a"/></linearGradient></defs><g filter="url(#bl)"><rect x="1.2" y="25" width="7" height="7.4" fill="#b9d6ea"/><rect x="1.2" y="25" width="1.6" height="7.4" fill="#d9b25a"/><path d="M2.6 2 Q1 2 1.6 4 L13.6 39 Q14.6 42 17.6 42 L28 41.6 Q31.4 41.2 30.4 38.4 L18.4 6.6 Q17.6 4.4 15 4 Z" fill="#2c3552"/><path d="M4.6 3.2 L14.6 4.8 Q16 5.2 16.6 6.6 L18.8 12.4 L9 13 L5.4 6 Z" fill="#353f61"/><circle cx="7.4" cy="5.6" r="1.7" fill="#161b2e"/><circle cx="11" cy="8.6" r="2" fill="#161b2e"/><circle cx="7.2" cy="9.8" r="1.5" fill="#161b2e"/><ellipse cx="16.4" cy="21.4" rx="6.6" ry="7.6" fill="#242c47" stroke="#3e4868" stroke-width="1"/><ellipse cx="15.4" cy="17.6" rx="4" ry="3.2" fill="#303a5a"/><path d="M11.6 26.6 Q16 30 22 26.4" stroke="#c7cbd8" stroke-width="0.8" fill="none"/><path d="M31.4 8.6 Q31.8 7.4 33.4 7.4 L44.6 6.8 Q47.2 6.8 46.6 9.4 L39.8 44.6 Q39.2 47.4 36.4 47 L25.6 45.8 Q23 45.4 23.8 42.8 Z" fill="#1b2340"/><path d="M32.8 9.4 L45 8.6 L38.4 45 L25.6 43.8 Z" fill="url(#tB1)"/><rect x="32.6" y="14" width="5.4" height="3.8" fill="#dfe4f0" opacity=".85"/><rect x="29.6" y="19.4" width="9" height="1.4" fill="#dfe4f0" opacity=".7"/><circle cx="33.6" cy="42.4" r="1.1" fill="#e8e8ee" opacity=".8"/></g></svg><div class="t ttl" style="left:190.5px;top:749.20px;font-size:16px;font-weight:normal;transform:scaleX(0.9775);transform-origin:0 50%;">TORRAS</div><div class="t ttl" style="left:260.79999999999995px;top:749.20px;font-size:16px;font-weight:normal;transform:scaleX(1.1068);transform-origin:0 50%;">for iPhone...</div><svg class="a" style="left:191px;top:777px" width="21" height="14" viewBox="0 0 21 14"><rect width="21" height="14" fill="#fff"/><rect y="0.00" width="21" height="1.08" fill="#d9405a"/><rect y="2.15" width="21" height="1.08" fill="#d9405a"/><rect y="4.31" width="21" height="1.08" fill="#d9405a"/><rect y="6.46" width="21" height="1.08" fill="#d9405a"/><rect y="8.62" width="21" height="1.08" fill="#d9405a"/><rect y="10.77" width="21" height="1.08" fill="#d9405a"/><rect y="12.92" width="21" height="1.08" fill="#d9405a"/><rect width="9.4" height="7.6" fill="#2f4a86"/></svg><div class="t asin" style="left:216px;top:774.20px;font-size:16px;font-weight:normal;transform:scaleX(0.9987);transform-origin:0 50%;">B0FGCLY8J2</div><svg class="a" style="left:434.5px;top:746px" width="48" height="48" viewBox="0 0 48 48"><defs><filter id="bl" x="-5%" y="-5%" width="110%" height="110%"><feGaussianBlur stdDeviation="0.45"/></filter><linearGradient id="tF1" x1="0" y1="0" x2="1" y2="1"><stop offset="0" stop-color="#d07422"/><stop offset="1" stop-color="#b65c18"/></linearGradient><linearGradient id="tF2" x1="0" y1="0" x2="1" y2="1"><stop offset="0" stop-color="#6b2f22"/><stop offset="0.45" stop-color="#c48a4a"/><stop offset="0.6" stop-color="#4d4a2c"/><stop offset="1" stop-color="#3a2418"/></linearGradient></defs><g filter="url(#bl)"><rect x="4.6" y="4" width="17" height="38.4" rx="2.6" fill="url(#tF1)"/><rect x="5.6" y="4.8" width="14.6" height="10" rx="2" fill="#cf7a2a"/><rect x="19.6" y="6" width="1.8" height="22" fill="#2a1a12"/><circle cx="8" cy="7.6" r="1.6" fill="#2a1710"/><circle cx="11.2" cy="9.8" r="1.6" fill="#2a1710"/><circle cx="8" cy="12" r="1.6" fill="#2a1710"/><circle cx="12.6" cy="22.6" r="5.2" fill="none" stroke="#a9541a" stroke-width="0.9"/><path d="M12.6 28 V32" stroke="#a9541a" stroke-width="0.9"/><path d="M11.2 33.6 L13.2 33.6 L13.8 40 L10.6 40 Z" fill="#e3b787"/><rect x="24.2" y="4" width="16.6" height="27.4" rx="2.6" fill="#8d4a22"/><rect x="25.8" y="5.2" width="13.6" height="25.2" rx="1.6" fill="url(#tF2)"/><rect x="29" y="4.8" width="6" height="1.5" rx="0.7" fill="#241510"/><circle cx="32.6" cy="23.2" r="4.6" fill="#1d3b2c" stroke="#41d890" stroke-width="1.1"/><path d="M33.4 20.4 L31.4 23.6 L33.6 23.4 L32 26.2" stroke="#41d890" stroke-width="0.8" fill="none"/><rect x="16" y="32.2" width="22" height="13.4" rx="2.4" fill="#bd651d"/><circle cx="29.6" cy="39.4" r="4.6" fill="none" stroke="#a85518" stroke-width="0.8"/><rect x="18" y="38.6" width="5" height="1.3" fill="#e6c9a8"/><rect x="37.4" y="32.4" width="6.8" height="13" rx="1.8" fill="#f4f4f6" stroke="#17171b" stroke-width="1"/><circle cx="39.6" cy="35" r="1.1" fill="#222"/><circle cx="41.8" cy="36.4" r="1.1" fill="#222"/><circle cx="39.6" cy="37.8" r="1.1" fill="#222"/></g></svg><div class="t ttl" style="left:493.8px;top:749.20px;font-size:16px;font-weight:normal;transform:scaleX(1.1198);transform-origin:0 50%;">Butaiga for iPhon...</div><svg class="a" style="left:494.3px;top:777px" width="21" height="14" viewBox="0 0 21 14"><rect width="21" height="14" fill="#fff"/><rect y="0.00" width="21" height="1.08" fill="#d9405a"/><rect y="2.15" width="21" height="1.08" fill="#d9405a"/><rect y="4.31" width="21" height="1.08" fill="#d9405a"/><rect y="6.46" width="21" height="1.08" fill="#d9405a"/><rect y="8.62" width="21" height="1.08" fill="#d9405a"/><rect y="10.77" width="21" height="1.08" fill="#d9405a"/><rect y="12.92" width="21" height="1.08" fill="#d9405a"/><rect width="9.4" height="7.6" fill="#2f4a86"/></svg><div class="t asin" style="left:519.2px;top:774.20px;font-size:16px;font-weight:normal;transform:scaleX(1.0025);transform-origin:0 50%;">B0FHQJX4FG</div><div class="t nr" style="left:758px;top:763.4px">未进前三页</div><div class="t nr" style="left:915.6px;top:763.4px">未进前三页</div><div class="t nr" style="left:1074px;top:763.4px">未进前三页</div><div class="t " style="left:1235.2px;top:723.00px;font-size:16.3px;font-weight:normal;transform:scaleX(1.1331);transform-origin:0 50%;color:#262626">03-09</div><div class="t " style="left:1235.2px;top:748.40px;font-size:16.3px;font-weight:normal;transform:scaleX(1.1583);transform-origin:0 50%;color:#262626">01:10</div><div class="t " style="left:1235.2px;top:773.80px;font-size:16.3px;font-weight:normal;transform:scaleX(1.1331);transform-origin:0 50%;color:#8e8e8e">03-09</div><div class="t " style="left:1235.2px;top:799.20px;font-size:16.3px;font-weight:normal;transform:scaleX(1.1583);transform-origin:0 50%;color:#8e8e8e">16:10</div><svg class="a" style="left:1340px;top:741px" width="165" height="56" viewBox="1340 741 165 56"><path d="M1375 754.0 H1492.5" stroke="#e0e6f1" stroke-width="1.3"/><path d="M1375 767.4 H1492.5" stroke="#e0e6f1" stroke-width="1.3"/><path d="M1375 781.5 H1492.5" stroke="#e0e6f1" stroke-width="1.3"/><path d="M1375 796.0 H1492.5" stroke="#e0e6f1" stroke-width="1.3"/><text x="1365.6" y="757.3" text-anchor="end" font-size="11.6" font-weight="bold" fill="#aab0b3" font-family="Liberation Sans, sans-serif">0</text><text x="1365.6" y="770.7" text-anchor="end" font-size="11.6" font-weight="bold" fill="#aab0b3" font-family="Liberation Sans, sans-serif">10</text><text x="1365.6" y="784.8" text-anchor="end" font-size="11.6" font-weight="bold" fill="#aab0b3" font-family="Liberation Sans, sans-serif">20</text><text x="1365.6" y="799.3" text-anchor="end" font-size="11.6" font-weight="bold" fill="#aab0b3" font-family="Liberation Sans, sans-serif">30</text><path d="M1384.6 789.0 L1404.2 789.0 L1423.9 789.0 L1443.5 779.2 L1463.1 789.0 L1482.8 789.0" fill="none" stroke="#f5b90f" stroke-width="1.6"/><circle cx="1384.6" cy="789.0" r="2.3" fill="#fff" stroke="#f5b90f" stroke-width="2.3"/><circle cx="1404.2" cy="789.0" r="2.3" fill="#fff" stroke="#f5b90f" stroke-width="2.3"/><circle cx="1423.9" cy="789.0" r="2.3" fill="#fff" stroke="#f5b90f" stroke-width="2.3"/><circle cx="1443.5" cy="779.2" r="2.3" fill="#fff" stroke="#f5b90f" stroke-width="2.3"/><circle cx="1463.1" cy="789.0" r="2.3" fill="#fff" stroke="#f5b90f" stroke-width="2.3"/><circle cx="1482.8" cy="789.0" r="2.3" fill="#fff" stroke="#f5b90f" stroke-width="2.3"/></svg><svg class="a" style="left:1566px;top:732px" width="18" height="18" viewBox="0 0 18 18" fill="none" stroke="#8c8c8c" stroke-width="1.2"><rect x="1.6" y="1.6" width="14" height="14.4" rx="2.4"/><path d="M5.2 8.8 H12 M8.6 5.4 V12.2" stroke="#555"/></svg><div class="a" style="left:1567.3px;top:763.5px;width:15px;height:15px;border-radius:50%;border:2px solid #d3d7e0"></div><svg class="a" style="left:1566px;top:793px" width="17" height="17" viewBox="0 0 17 17" fill="none" stroke="#d3d7e0" stroke-width="1.6"><rect x="2.4" y="1.4" width="12.2" height="14" rx="3.2"/><path d="M5.4 6.8 H11.6 M5.4 10 H9.6" stroke-width="1.3"/></svg><div class="t op" style="left:1823.3px;top:748.30px;">操作</div><svg class="a" style="left:1832.2px;top:779.2px" width="14" height="9.2" viewBox="-1 -1 14 9.2"><path d="M0 0 L6.0 7.2 L12 0" fill="none" stroke="#7b6ef6" stroke-width="1.5"/></svg><div class="a cb" style="top:226px"></div><div class="a sep" style="left:374px"></div><div class="a sep" style="left:414px"></div><div class="a sep" style="left:677px"></div><div class="a sep" style="left:717px"></div><div class="a sep" style="left:875px"></div><div class="a sep" style="left:1033px"></div><div class="a sep" style="left:1191px"></div><div class="a sep" style="left:1323px"></div><div class="a sep" style="left:1508px"></div><div class="a sep" style="left:1640px"></div><div class="a sep" style="left:1798px"></div><div class="t th" style="left:131.5px;top:224.60px;">监控<span style="font-size:16.5px;letter-spacing:1.4px;padding-left:0.7px">ASIN</span>信息</div><svg class="a" style="left:345px;top:228px" width="10" height="16" viewBox="0 0 10 16"><path d="M0.6 6.4 L5 0.8 L9.4 6.4 Z" fill="#b3b3b3"/><path d="M0.6 9.2 L5 14.8 L9.4 9.2 Z" fill="#b3b3b3"/></svg><div class="t th" style="left:435px;top:224.60px;">广告商品</div><svg class="a" style="left:648.2px;top:228px" width="10" height="16" viewBox="0 0 10 16"><path d="M0.6 6.4 L5 0.8 L9.4 6.4 Z" fill="#b3b3b3"/><path d="M0.6 9.2 L5 14.8 L9.4 9.2 Z" fill="#b3b3b3"/></svg><div class="t th c" style="left:697.0px;top:213.60px;width:200px;"><span style="font-size:17px;letter-spacing:1.6px;padding-left:0.8px">4</span>星广告位排名</div><svg class="a" style="left:792px;top:242px" width="14" height="14" viewBox="0 0 14 14" fill="none" stroke="#8b97c0" stroke-width="1"><circle cx="7" cy="7" r="5.7"/><path d="M5.3 5.7 A1.7 1.7 0 1 1 7.8 7.1 Q7 7.6 7 8.4" /><rect x="6.5" y="9.3" width="1" height="1" fill="#8b97c0" stroke="none"/></svg><div class="t th c" style="left:855.3px;top:213.60px;width:200px;">相关商品<span style="padding:0 1.7px">(</span>上栏<span style="padding:0 1.7px">)</span></div><svg class="a" style="left:949.7px;top:242px" width="14" height="14" viewBox="0 0 14 14" fill="none" stroke="#8b97c0" stroke-width="1"><circle cx="7" cy="7" r="5.7"/><path d="M5.3 5.7 A1.7 1.7 0 1 1 7.8 7.1 Q7 7.6 7 8.4" /><rect x="6.5" y="9.3" width="1" height="1" fill="#8b97c0" stroke="none"/></svg><div class="t th c" style="left:1013.5px;top:213.60px;width:200px;">相关商品<span style="padding:0 1.7px">(</span>下栏<span style="padding:0 1.7px">)</span></div><svg class="a" style="left:1107.7px;top:242px" width="14" height="14" viewBox="0 0 14 14" fill="none" stroke="#8b97c0" stroke-width="1"><circle cx="7" cy="7" r="5.7"/><path d="M5.3 5.7 A1.7 1.7 0 1 1 7.8 7.1 Q7 7.6 7 8.4" /><rect x="6.5" y="9.3" width="1" height="1" fill="#8b97c0" stroke="none"/></svg><div class="t th" style="left:1219.6px;top:224.60px;">抓取时间</div><svg class="a" style="left:1284.2px;top:229.6px" width="14" height="14" viewBox="0 0 14 14" fill="none" stroke="#8b97c0" stroke-width="1"><circle cx="7" cy="7" r="5.7"/><path d="M5.3 5.7 A1.7 1.7 0 1 1 7.8 7.1 Q7 7.6 7 8.4" /><rect x="6.5" y="9.3" width="1" height="1" fill="#8b97c0" stroke="none"/></svg><div class="t th c" style="left:1316.5px;top:213.60px;width:200px;">近<span style="font-size:17.4px;letter-spacing:1.8px;padding-left:1.2px">24</span>小时排名趋势</div><svg class="a" style="left:1411px;top:242px" width="14" height="14" viewBox="0 0 14 14" fill="none" stroke="#8b97c0" stroke-width="1"><circle cx="7" cy="7" r="5.7"/><path d="M5.3 5.7 A1.7 1.7 0 1 1 7.8 7.1 Q7 7.6 7 8.4" /><rect x="6.5" y="9.3" width="1" height="1" fill="#8b97c0" stroke="none"/></svg><div class="t th" style="left:1530.4px;top:224.60px;">标签<span class="sl">/</span>备注</div><svg class="a" style="left:1606.2px;top:229.6px" width="14" height="14" viewBox="0 0 14 14" fill="none" stroke="#8b97c0" stroke-width="1"><circle cx="7" cy="7" r="5.7"/><path d="M5.3 5.7 A1.7 1.7 0 1 1 7.8 7.1 Q7 7.6 7 8.4" /><rect x="6.5" y="9.3" width="1" height="1" fill="#8b97c0" stroke="none"/></svg><div class="t th c" style="left:1611.6px;top:213.40px;width:200px;">创建人<span class="sl">/</span>时间<span class="sl">/</span></div><div class="t th c" style="left:1612.3px;top:239.30px;width:200px;">邮编</div><svg class="a" style="left:1769px;top:228px" width="10" height="16" viewBox="0 0 10 16"><path d="M0.6 6.4 L5 0.8 L9.4 6.4 Z" fill="#b3b3b3"/><path d="M0.6 9.2 L5 14.8 L9.4 9.2 Z" fill="#b3b3b3"/></svg><div class="t th" style="left:1823.5px;top:224.60px;">操作</div><svg class="a" style="left:100px;top:192px" width="1546" height="94" viewBox="100 192 1546 94"><rect x="110.9" y="202.5" width="1524.2" height="71.8" rx="7.5" ry="7.5" fill="none" stroke="#f54a4a" stroke-width="5.8"/></svg><div class="a" style="left:1665.5px;top:305px;width:110.5px;height:115px;background:#fbfbfb"></div><div class="a" style="left:1665.5px;top:420px;width:110.5px;height:383px;background:#fdfdfd"></div><div class="a" style="left:1712.3px;top:312.10px;width:19.65px;height:19.75px;background:#f3f3f3"></div><div class="a" style="left:1731.7px;top:312.10px;width:19.65px;height:19.75px;background:#ebecec"></div><div class="a" style="left:1751px;top:312.10px;width:19.65px;height:19.75px;background:#f3f3f3"></div><div class="a" style="left:1712.3px;top:331.55px;width:19.65px;height:19.75px;background:#eeeeee"></div><div class="a" style="left:1731.7px;top:331.55px;width:19.65px;height:19.75px;background:#d0d0d0"></div><div class="a" style="left:1751px;top:331.55px;width:19.65px;height:19.75px;background:#efefef"></div><div class="a" style="left:1673.7px;top:351.00px;width:19.65px;height:19.75px;background:#f8f8f4"></div><div class="a" style="left:1693px;top:351.00px;width:19.65px;height:19.75px;background:#e3e5e5"></div><div class="a" style="left:1712.3px;top:351.00px;width:19.65px;height:19.75px;background:#e8e8e8"></div><div class="a" style="left:1731.7px;top:351.00px;width:19.65px;height:19.75px;background:#e6e7ea"></div><div class="a" style="left:1751px;top:351.00px;width:19.65px;height:19.75px;background:#e8e8e8"></div><div class="a" style="left:1770.3px;top:351.00px;width:6.00px;height:19.75px;background:#e6e6e6"></div><div class="a" style="left:1712.3px;top:370.45px;width:19.65px;height:19.75px;background:#e6e6e4"></div><div class="a" style="left:1731.7px;top:370.45px;width:19.65px;height:19.75px;background:#e2e2e2"></div><div class="a" style="left:1751px;top:370.45px;width:19.65px;height:19.75px;background:#e6e6e6"></div><div class="a" style="left:1712.3px;top:389.90px;width:19.65px;height:19.75px;background:#f5f5f5"></div><div class="a" style="left:1731.7px;top:389.90px;width:19.65px;height:19.75px;background:#f2f2f2"></div><div class="a" style="left:1751px;top:389.90px;width:19.65px;height:19.75px;background:#f3f3f3"></div><div class="a" style="left:1712.3px;top:467.70px;width:19.65px;height:19.75px;background:#f3f2f0"></div><div class="a" style="left:1731.7px;top:467.70px;width:19.65px;height:19.75px;background:#c8caca"></div><div class="a" style="left:1751px;top:467.70px;width:19.65px;height:19.75px;background:#eaecf0"></div><div class="a" style="left:1693px;top:487.15px;width:19.65px;height:19.75px;background:#eceef2"></div><div class="a" style="left:1712.3px;top:487.15px;width:19.65px;height:19.75px;background:#f2f2f2"></div><div class="a" style="left:1731.7px;top:487.15px;width:19.65px;height:19.75px;background:#f2f2f2"></div><div class="a" style="left:1751px;top:487.15px;width:19.65px;height:19.75px;background:#f4f4f4"></div><div class="a" style="left:1770.3px;top:487.15px;width:6.00px;height:19.75px;background:#f3f3f3"></div><div class="a" style="left:1693px;top:506.60px;width:19.65px;height:19.75px;background:#f7f7f7"></div><div class="a" style="left:1712.3px;top:506.60px;width:19.65px;height:19.75px;background:#f6f6f6"></div><div class="a" style="left:1731.7px;top:506.60px;width:19.65px;height:19.75px;background:#f0f0f0"></div><div class="a" style="left:1751px;top:506.60px;width:19.65px;height:19.75px;background:#f5f5f5"></div><div class="a" style="left:1770.3px;top:506.60px;width:6.00px;height:19.75px;background:#f7f7f7"></div><div class="a" style="left:1712.3px;top:526.05px;width:19.65px;height:19.75px;background:#eeeeec"></div><div class="a" style="left:1731.7px;top:526.05px;width:19.65px;height:19.75px;background:#e8e8e8"></div><div class="a" style="left:1751px;top:526.05px;width:19.65px;height:19.75px;background:#eeeeee"></div><div class="a" style="left:1712.3px;top:603.85px;width:19.65px;height:19.75px;background:#f5f5f3"></div><div class="a" style="left:1731.7px;top:603.85px;width:19.65px;height:19.75px;background:#d6d8d8"></div><div class="a" style="left:1751px;top:603.85px;width:19.65px;height:19.75px;background:#f0f2f2"></div><div class="a" style="left:1693px;top:623.30px;width:19.65px;height:19.75px;background:#f7f7f7"></div><div class="a" style="left:1712.3px;top:623.30px;width:19.65px;height:19.75px;background:#f5f5f5"></div><div class="a" style="left:1731.7px;top:623.30px;width:19.65px;height:19.75px;background:#eceeee"></div><div class="a" style="left:1751px;top:623.30px;width:19.65px;height:19.75px;background:#f6f6f6"></div><div class="a" style="left:1770.3px;top:623.30px;width:6.00px;height:19.75px;background:#f8f8f6"></div><div class="a" style="left:1693px;top:642.75px;width:19.65px;height:19.75px;background:#ececec"></div><div class="a" style="left:1712.3px;top:642.75px;width:19.65px;height:19.75px;background:#eeeeee"></div><div class="a" style="left:1731.7px;top:642.75px;width:19.65px;height:19.75px;background:#eeeeee"></div><div class="a" style="left:1751px;top:642.75px;width:19.65px;height:19.75px;background:#efefef"></div><div class="a" style="left:1770.3px;top:642.75px;width:6.00px;height:19.75px;background:#f0f0f0"></div><div class="a" style="left:1712.3px;top:662.20px;width:19.65px;height:19.75px;background:#e6e6e6"></div><div class="a" style="left:1731.7px;top:662.20px;width:19.65px;height:19.75px;background:#dcdcdc"></div><div class="a" style="left:1751px;top:662.20px;width:19.65px;height:19.75px;background:#e6e8e8"></div><div class="a" style="left:1712.3px;top:740.00px;width:19.65px;height:19.75px;background:#f8f8f8"></div><div class="a" style="left:1731.7px;top:740.00px;width:19.65px;height:19.75px;background:#f5f5f5"></div><div class="a" style="left:1751px;top:740.00px;width:19.65px;height:19.75px;background:#f8f8f8"></div><div class="a" style="left:1712.3px;top:759.45px;width:19.65px;height:19.75px;background:#f3f3f1"></div><div class="a" style="left:1731.7px;top:759.45px;width:19.65px;height:19.75px;background:#d2d2d2"></div><div class="a" style="left:1751px;top:759.45px;width:19.65px;height:19.75px;background:#f0f0f0"></div><div class="a" style="left:1693px;top:778.90px;width:19.65px;height:19.75px;background:#e4e7ea"></div><div class="a" style="left:1712.3px;top:778.90px;width:19.65px;height:19.75px;background:#efeeec"></div><div class="a" style="left:1731.7px;top:778.90px;width:19.65px;height:19.75px;background:#eeeeee"></div><div class="a" style="left:1751px;top:778.90px;width:19.65px;height:19.75px;background:#eeeeee"></div><div class="a" style="left:1770.3px;top:778.90px;width:6.00px;height:19.75px;background:#efefef"></div><div class="a" style="left:15px;top:818px;width:1878px;height:60px;background:#fff"></div><div class="a" style="left:30px;top:818px;width:1848px;height:1px;background:#ececec"></div><div class="t " style="left:66.2px;top:838.80px;font-size:18px;font-weight:normal;transform:scaleX(1.0378);transform-origin:0 50%;color:#5f58dc">1-4</div><div class="t " style="left:97.6px;top:838.80px;font-size:18px;font-weight:normal;transform:scaleX(1.1691);transform-origin:0 50%;color:#262626">/ 4</div><div class="t " style="left:172.6px;top:839.40px;color:#c3c3c3;font-size:15.4px;letter-spacing:0.4px">上一页</div><div class="a" style="left:241px;top:833px;width:31px;height:31.5px;background:#766df6;border-radius:4px"></div><div class="t  c" style="left:241.0px;top:839.00px;width:31px;color:#fff;font-weight:bold;font-size:17px;font-family:'Liberation Serif',serif">1</div><div class="t " style="left:320.2px;top:839.40px;color:#c3c3c3;font-size:15.4px;letter-spacing:0.4px">下一页</div><div class="a" style="left:1521px;top:830px;width:120px;height:39px;border:1px solid #dfdfe8;border-radius:5px;background:#fff"></div><div class="t " style="left:1535.2px;top:839.40px;color:#262626;font-size:15.4px;letter-spacing:0.4px"><span style="letter-spacing:1.1px;font-size:16.3px">10</span>条<span style="padding:0 1.4px">/</span>页</div><svg class="a" style="left:1615.7px;top:845px" width="12" height="8.4" viewBox="-1 -1 12 8.4"><path d="M0 0 L5.0 6.4 L10 0" fill="none" stroke="#c4c4c4" stroke-width="1.2"/></svg><div class="t " style="left:1664.6px;top:839.40px;color:#8c8c8c;font-size:15.4px;letter-spacing:0.4px">跳转至</div><div class="a" style="left:1723px;top:830px;width:60px;height:38px;border:1px solid #dfdfe8;border-radius:5px;background:#fff"></div><div class="t " style="left:1789.8px;top:839.40px;color:#8c8c8c;font-size:15.4px;letter-spacing:0.4px">页</div><div class="a" style="left:1811px;top:829px;width:67px;height:38.6px;background:#766df6;border-radius:6px;box-shadow:0 2px 2px rgba(118,109,246,.15)"></div><div class="t " style="left:1826px;top:839.00px;color:#fff;-webkit-text-stroke:0.3px #fff;font-weight:bold;font-size:15.6px;word-spacing:1.6px">跳 转</div><svg class="a" style="left:0;top:0;pointer-events:none" width="1920" height="878" viewBox="0 0 1920 878"><defs><pattern id="wm" x="57.6" y="11.3" width="175" height="65.2" patternUnits="userSpaceOnUse" patternTransform="skewY(-1.8)"><g font-family="Liberation Sans, sans-serif" font-size="16" letter-spacing="0.75" fill="#000" fill-opacity="0.013" text-anchor="middle"><text x="44" y="16.3" transform="rotate(-25 44 16.3)" dy="5.6">17185</text><text x="131.5" y="48.9" transform="rotate(-25 131.5 48.9)" dy="5.6">17185</text></g></pattern></defs><path d="M0 79 H1908 V878 H0 Z M1665.5 305 H1776 V803 H1665.5 Z" fill-rule="evenodd" fill="url(#wm)"/></svg><div class="a" style="left:1908px;top:79px;width:12px;height:799px;background:#ededed"></div><div class="a" style="left:1908px;top:79px;width:12px;height:710px;background:#bdbdbd;border-radius:6px"></div></div></body></html>
